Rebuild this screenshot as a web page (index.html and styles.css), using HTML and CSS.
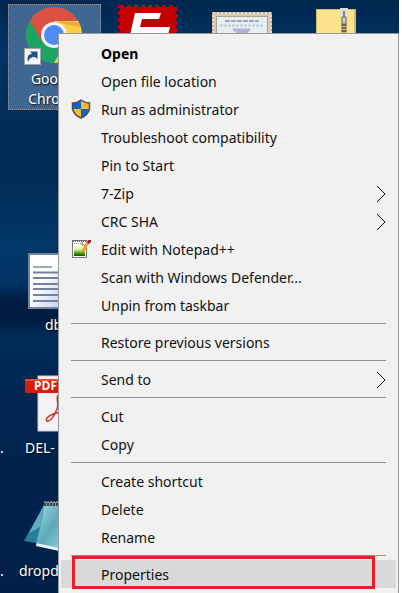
FILE: index.html
```
<!DOCTYPE html>
<html lang="en">
<head>
<meta charset="utf-8">
<title>Desktop</title>
<link rel="stylesheet" href="styles.css">
</head>
<body>
<main class="desktop">
  <div class="shortcut chrome">
    <svg width="60" height="60" viewBox="2 0 60 60" aria-hidden="true">
      <circle cx="31" cy="30" r="28" fill="#1da462"/>
      <path d="M31 30 L6.8 16 A28 28 0 0 1 55.2 16 Z" fill="#dd5144"/>
      <path d="M31 30 L31 16 L55.2 16 A28 28 0 0 1 31 58 L43 37 Z" fill="#ffcd46"/>
      <path d="M6.8 16 L19 37 L31 30 L31 16 Z" fill="#dd5144"/>
      <path d="M6.8 16 L19 37 Q25 44 34 42 L29 58 A28 28 0 0 1 6.8 16 Z" fill="#1da462"/>
      <path d="M31 17 H55.6 L57 22 Z" fill="#c7892f" opacity=".45"/>
      <circle cx="31" cy="30" r="13" fill="#f1f1f1"/>
      <circle cx="31" cy="30" r="10" fill="#4c8bf5"/>
      <rect x="1.5" y="43.500" width="16" height="16" fill="#f3f5f8" stroke="#a5a5a5"/>
      <path d="M5 57 Q3 49 9 49 L7 46.500 H14.500 V54 L12 52 Q6 52 5 57 Z" fill="#234f87"/>
    </svg>
    <span>Google<br>Chrome</span>
  </div>
  <svg class="pic stamp" width="60" height="30" viewBox="0 0 60 30" aria-hidden="true">
    <rect x="2" y="2" width="56" height="32" fill="#c40000"/>
    <rect x="2" y="2" width="56" height="32" fill="none" stroke="#c40000" stroke-width="4" stroke-dasharray="4 3"/>
    <path d="M17 8 H43 L41 14 H24 L22 22 H52 L50 30 H12 Z" fill="#fff"/>
  </svg>
  <svg class="pic certificate" width="60" height="22" viewBox="0 0 60 22" aria-hidden="true">
    <rect width="60" height="24" fill="#a79c90"/>
    <rect x="1" y="1" width="58" height="24" fill="#d8c8b0" stroke="#e6dece" stroke-width="2" stroke-dasharray="2 2"/>
    <rect x="4.500" y="4.500" width="51" height="22" fill="#e6efef" stroke="#b5a28c"/>
    <path d="M13 9 H47" stroke="#99a8cc" stroke-width="2" stroke-dasharray="5 1"/>
    <path d="M8 13.500 H52" stroke="#c3cad8" stroke-width="2" stroke-dasharray="3 1"/>
    <path d="M21 18 H38 M24 21 H36" stroke="#acb5d0" stroke-width="3"/>
  </svg>
  <svg class="pic zip" width="40" height="26" viewBox="0 0 40 26" aria-hidden="true">
    <path d="M0 1 H40 V26 H0 Z" fill="#d2b967"/>
    <path d="M1 2 H25 V26 H1 Z M31 2 H38 V26 H31 Z" fill="#ffe28f"/>
    <path d="M24 0 H32 L31 9 H25 Z" fill="#dcdcdc"/>
    <path d="M28 3 V16" stroke="#8a8a8a" stroke-width="2"/>
    <path d="M26 9 H30 V16 H26 Z" fill="#c9c9c9" stroke="#777"/>
    <path d="M28 16 V26" stroke="#6d675b" stroke-width="5" stroke-dasharray="2 1"/>
  </svg>
  <div class="shortcut document">
    <svg width="40" height="56" viewBox="0 0 40 56" aria-hidden="true">
      <defs><linearGradient id="paper" x1="0" y1="0" x2="1" y2="1"><stop offset=".4" stop-color="#fff"/><stop offset="1" stop-color="#b9c8f2"/></linearGradient></defs>
      <rect width="40" height="56" fill="#7385a6"/>
      <rect x="2" y="2" width="38" height="52" fill="url(#paper)"/>
      <path d="M5 14 H24" stroke="#9aaabf" stroke-width="2"/>
      <path d="M5 19.500 H40 M5 25 H40 M5 31 H40 M5 36 H40 M5 42 H40 M5 48 H40" stroke="#71839e" stroke-width="2"/>
    </svg>
    <span>db</span>
  </div>
  <div class="shortcut pdf">
    <svg width="44" height="58" viewBox="0 0 44 58" aria-hidden="true">
      <rect x="13" y="1" width="31" height="55" fill="#f4f4f4" stroke="#c9cdd2"/>
      <rect y="4" width="44" height="14" fill="#d91c05"/>
      <path d="M0 4 H44 V6 H0 Z" fill="#f04a2d"/>
      <path d="M35 19 C29 22 35 28 32 34 C29 41 25 47 22 46 C19 43 26 39 36 37" fill="none" stroke="#d52b20" stroke-width="1.500"/>
      <text x="9" y="15" class="badge">PDF</text>
    </svg>
    <span>DEL-</span>
  </div>
  <div class="shortcut notepad">
    <svg width="44" height="52" viewBox="0 0 44 52" aria-hidden="true">
      <defs><linearGradient id="pad" x1="0" y1="0" x2="1" y2="1"><stop offset="0" stop-color="#a9dbe5"/><stop offset=".5" stop-color="#5ba9bc"/><stop offset="1" stop-color="#a8d9e2"/></linearGradient></defs>
      <path d="M20 4 L44 4 V52 L12 45 Z" fill="#e5f3f6"/>
      <path d="M20 3 L44 4 V49 L12 42 Z" fill="url(#pad)"/>
      <path d="M20 4 L0 40 L12 42 Q18 22 20 4 Z" fill="#27809a"/>
      <path d="M20 4 L5 32 L16 26 Z" fill="#8ac8d4" opacity=".6"/>
      <path d="M20 3 H44" stroke="#8b9699" stroke-width="4"/>
      <path d="M20 3 H44" stroke="#40484b" stroke-width="4" stroke-dasharray="2 1"/>
      <path d="M20 1 H44" stroke="#c9d3d5" stroke-dasharray="2 1"/>
    </svg>
    <span>dropd</span>
  </div>
  <span class="trail trail-upper">.</span>
  <span class="trail trail-lower">.</span>

  <nav class="menu" aria-label="Context menu">
    <button class="item default">Open</button>
    <button class="item">Open file location</button>
    <button class="item">
      <svg class="icon" width="20" height="20" viewBox="0 0 20 20" aria-hidden="true">
        <path d="M10 1 Q6 4 2 4 V10 Q3 16 10 19 Z" fill="#0b67c5"/>
        <path d="M10 1 Q14 4 18 4 V10 Q17 16 10 19 Z" fill="#fdb931"/>
        <path d="M2 10 H10 V19 Q3 16 2 10 Z" fill="#fdb931"/>
        <path d="M10 10 H18 Q17 16 10 19 Z" fill="#0b67c5"/>
        <path d="M10 1 Q6 4 1.500 4 V10 Q3 16 10 19 Q17 16 18.500 10 V4 Q14 4 10 1 Z" fill="none" stroke="#4b4f54" stroke-width="1.500"/>
      </svg>
      Run as administrator
    </button>
    <button class="item">Troubleshoot compatibility</button>
    <button class="item">Pin to Start</button>
    <button class="item">7-Zip
      <svg class="arrow" width="10" height="18" viewBox="0 0 10 18" aria-hidden="true"><path d="M1 1 L9 9 L1 17"/></svg>
    </button>
    <button class="item">CRC SHA
      <svg class="arrow" width="10" height="18" viewBox="0 0 10 18" aria-hidden="true"><path d="M1 1 L9 9 L1 17"/></svg>
    </button>
    <button class="item">
      <svg class="icon" width="20" height="20" viewBox="0 0 20 20" aria-hidden="true">
        <defs><linearGradient id="grass" x1="0" y1="0" x2="0" y2="1"><stop offset="0" stop-color="#fff"/><stop offset=".4" stop-color="#d8efb0"/><stop offset=".7" stop-color="#55b010"/><stop offset="1" stop-color="#074d05"/></linearGradient></defs>
        <rect x="1.500" y="1.500" width="14" height="17" fill="#fff" stroke="#777"/>
        <rect x="3" y="6" width="11" height="11" fill="url(#grass)"/>
        <path d="M2 2 H15" stroke="#666" stroke-width="2" stroke-dasharray="1 1"/>
        <path d="M3 4.500 H10" stroke="#888" stroke-dasharray="1 1"/>
        <path d="M11 1 V6 H15" fill="none" stroke="#777"/>
        <path d="M11 15 L12 12 L17 3" fill="none" stroke="#efa51d" stroke-width="3"/>
        <path d="M10 16 L11 13 L13 14 Z" fill="#72500f"/>
        <path d="M16 4 L17 1 H20 V3 L18 5 Z" fill="#902238"/>
      </svg>
      Edit with Notepad++
    </button>
    <button class="item">Scan with Windows Defender...</button>
    <button class="item">Unpin from taskbar</button>
    <hr>
    <button class="item">Restore previous versions</button>
    <hr>
    <button class="item">Send to
      <svg class="arrow" width="10" height="18" viewBox="0 0 10 18" aria-hidden="true"><path d="M1 1 L9 9 L1 17"/></svg>
    </button>
    <hr>
    <button class="item">Cut</button>
    <button class="item">Copy</button>
    <hr>
    <button class="item">Create shortcut</button>
    <button class="item">Delete</button>
    <button class="item">Rename</button>
    <hr>
    <button class="item active">Properties</button>
  </nav>
</main>
</body>
</html>
```
FILE: styles.css
```
* {
  box-sizing: border-box;
}

body {
  margin: 0;
  background: #fff;
  font-family: "Noto Sans", "Open Sans", sans-serif;
  font-size: 14px;
}

.desktop {
  position: relative;
  min-height: 100vh;
  margin-right: 3px;
  padding: 33px 0 0 58px;
  overflow: hidden;
  background: linear-gradient(#00264f 0, #003565 50px, #002d59 110px, #002c57 180px, #003868 250px, #003262 285px, #001c40 300px, #001c40 320px, #002c5a 335px, #002550 400px, #00204a 593px);
}

.shortcut {
  position: absolute;
  color: #fff;
  line-height: 20px;
  text-shadow: 1px 1px 2px #000;
  white-space: nowrap;
}

.shortcut svg {
  display: block;
  overflow: visible;
}

.chrome {
  top: 4px;
  left: 8px;
  display: flex;
  flex-direction: column;
  align-items: center;
  width: 93px;
  height: 106px;
  border: 1px dotted #b09a8c;
  background: #3f6791;
  text-align: center;
}

.chrome span {
  padding-top: 4px;
}

.pic {
  position: absolute;
}

.stamp {
  top: 5px;
  left: 118px;
}

.certificate {
  top: 12px;
  left: 212px;
}

.zip {
  top: 8px;
  left: 316px;
}

.document {
  top: 253px;
  left: 28px;
}

.document span {
  display: block;
  padding: 6px 0 0 17px;
}

.pdf {
  top: 375px;
  left: 25px;
}

.pdf span {
  display: block;
  padding-top: 5px;
}

.badge {
  fill: #fff;
  font-family: "Open Sans", sans-serif;
  font-size: 12px;
  font-weight: 700;
  text-shadow: none;
}

.notepad {
  top: 501px;
  left: 24px;
}

.notepad span {
  display: block;
  margin-left: -5px;
  padding-top: 8px;
}

.trail {
  position: absolute;
  left: 0;
  color: #fff;
  line-height: 20px;
}

.trail-upper {
  top: 438px;
}

.trail-lower {
  top: 561px;
}

.menu {
  position: relative;
  display: flex;
  flex-direction: column;
  min-height: calc(100vh - 33px);
  padding: 5px 2px;
  border: 1px solid #999;
  border-bottom: 0;
  background: #f1f1f1;
}

.item {
  position: relative;
  display: flex;
  align-items: center;
  justify-content: space-between;
  height: 28px;
  padding: 2px 10px 0 40px;
  border: 0;
  background: none;
  color: #111;
  font: inherit;
  line-height: 20px;
  text-align: left;
}

.default {
  color: #000;
  font-weight: 700;
}

.icon {
  position: absolute;
  top: 4px;
  left: 10px;
}

.arrow {
  fill: none;
  stroke: #111;
}

hr {
  width: auto;
  height: 1px;
  margin: 4px 10px;
  border: 0;
  background: #919191;
}

.active {
  background: #d9d9d9;
}

.active::after {
  content: "";
  position: absolute;
  inset: -4px 21px -1px 11px;
  border: 3px solid #ee1c24;
}
```
